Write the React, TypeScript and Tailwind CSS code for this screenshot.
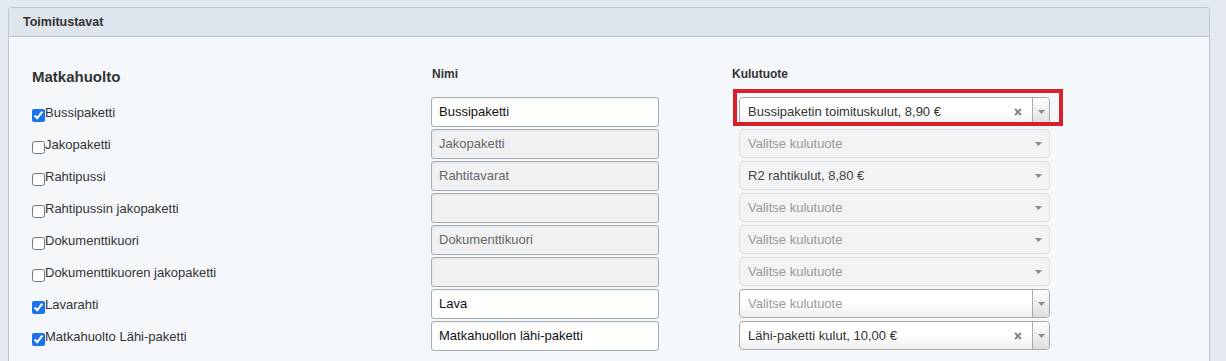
type Row = {
  label: string;
  checked: boolean;
  name: string;
  cost?: string;
};

const rows: Row[] = [
  { label: "Bussipaketti", checked: true, name: "Bussipaketti", cost: "Bussipaketin toimituskulut, 8,90 €" },
  { label: "Jakopaketti", checked: false, name: "Jakopaketti" },
  { label: "Rahtipussi", checked: false, name: "Rahtitavarat", cost: "R2 rahtikulut, 8,80 €" },
  { label: "Rahtipussin jakopaketti", checked: false, name: "" },
  { label: "Dokumenttikuori", checked: false, name: "Dokumenttikuori" },
  { label: "Dokumenttikuoren jakopaketti", checked: false, name: "" },
  { label: "Lavarahti", checked: true, name: "Lava" },
  { label: "Matkahuolto Lähi-paketti", checked: true, name: "Matkahuollon lähi-paketti", cost: "Lähi-paketti kulut, 10,00 €" },
];

function Caret() {
  return (
    <svg width="7" height="4" viewBox="0 0 7 4" className="shrink-0">
      <path d="M0 0h7L3.5 4z" fill="#8a8a8a" />
    </svg>
  );
}

function CostSelect({ value, enabled, highlight }: { value?: string; enabled: boolean; highlight?: boolean }) {
  if (!enabled) {
    return (
      <div className="ml-[7px] flex h-[29px] w-[311px] items-center rounded-[4px] border border-[#dedfe1] bg-[#f2f3f4] pr-[7px]">
        <span className={`flex-1 truncate pl-[8px] text-[13px] ${value ? "text-[#444]" : "text-[#999]"}`}>
          {value ?? "Valitse kulutuote"}
        </span>
        <Caret />
      </div>
    );
  }

  return (
    <div className="relative ml-[7px] flex h-[29px] w-[311px] items-center rounded-[4px] border border-[#aaa] bg-[linear-gradient(to_bottom,#fff_50%,#eee_100%)]">
      <span className={`flex-1 truncate pl-[8px] text-[13px] ${value ? "text-[#333]" : "text-[#999]"}`}>
        {value ?? "Valitse kulutuote"}
      </span>
      {value && (
        <svg width="8" height="8" viewBox="0 0 8 8" className="mr-[10px] shrink-0">
          <path d="M1 1l6 6M7 1L1 7" stroke="#888" strokeWidth="2" />
        </svg>
      )}
      <span className="flex h-full w-[17px] shrink-0 items-center justify-center rounded-r-[4px] border-l border-[#aaa] bg-[linear-gradient(to_bottom,#fff,#ddd)]">
        <Caret />
      </span>
      {highlight && (
        <div className="pointer-events-none absolute left-[-7px] top-[-9px] h-[37px] w-[330px] border-4 border-[#d81f2a]" />
      )}
    </div>
  );
}

export default function App() {
  return (
    <div className="h-[361px] w-[1226px] overflow-hidden bg-[#e4e9ef] pl-[8px] pt-[7px] font-['Liberation_Sans',Arial,sans-serif]">
      <div className="w-[1202px] rounded-t-[3px] border border-[#bfc7cf] bg-[#f5f8fb]">
        <div className="flex h-[29px] items-center rounded-t-[3px] border-b border-[#b9c1c9] bg-[#dfe5ec] pl-[14px] text-[12.5px] font-bold text-[#333]">
          Toimitustavat
        </div>

        <div className="pl-[23px] pt-[29px] pb-[20px]">
          <div className="flex h-[31px] text-[#333]">
            <div className="w-[399px] pt-[2px] text-[15px] font-bold leading-[18px]">Matkahuolto</div>
            <div className="w-[301px] pl-[1px] text-[12px] font-bold leading-[16px]">Nimi</div>
            <div className="text-[12px] font-bold leading-[16px]">Kulutuote</div>
          </div>

          {rows.map((r, i) => (
            <div key={r.label} className="flex h-[32px]">
              <label className="flex w-[399px] items-start pt-[8px] text-[13px] text-[#333]">
                <input
                  type="checkbox"
                  defaultChecked={r.checked}
                  className="m-0 mt-[4px] h-[13px] w-[13px] shrink-0 accent-[#1a73e8]"
                />
                <span className="leading-[16px]">{r.label}</span>
              </label>
              <div className="w-[301px]">
                <div
                  className={`flex h-[30px] w-[228px] items-center rounded-[3px] border border-[#a3adb8] pl-[7px] text-[13px] shadow-[inset_0_1px_2px_rgba(0,0,0,0.06)] ${
                    r.checked ? "bg-white text-[#111]" : "bg-[#eff1f3] text-[#666]"
                  }`}
                >
                  {r.name}
                </div>
              </div>
              <CostSelect value={r.cost} enabled={r.checked} highlight={i === 0} />
            </div>
          ))}
        </div>
      </div>
    </div>
  );
}
